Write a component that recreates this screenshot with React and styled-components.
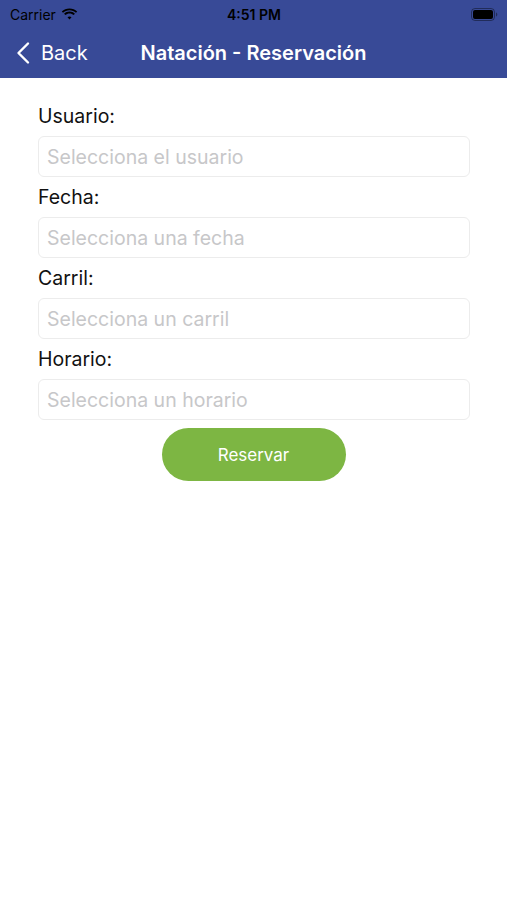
import React from "react";
import styled, { createGlobalStyle } from "styled-components";

const Global = createGlobalStyle`
  html, body { margin: 0; padding: 0; background: #fff; }
  body { font-family: "Inter", "Liberation Sans", sans-serif; -webkit-font-smoothing: antialiased; }
  * { box-sizing: border-box; }
`;

const Screen = styled.div`
  width: 507px;
  min-height: 900px;
  background: #fff;
  display: flex;
  flex-direction: column;
`;

const Header = styled.header`
  background: #384a97;
  height: 78px;
  display: flex;
  flex-direction: column;
`;

const StatusBar = styled.div`
  height: 28px;
  display: grid;
  grid-template-columns: 1fr auto 1fr;
  align-items: center;
  padding: 0 9px 0 10px;
  color: #000;
  font-size: 14px;
`;

const Carrier = styled.div`
  display: flex;
  align-items: center;
  gap: 5px;
  font-weight: 400;
`;

const Time = styled.div`
  font-weight: 600;
  font-size: 14px;
`;

const Battery = styled.div`
  justify-self: end;
  display: flex;
  align-items: center;
`;

const NavBar = styled.div`
  flex: 1;
  position: relative;
  display: flex;
  align-items: center;
  justify-content: center;
  color: #fff;
`;

const BackButton = styled.div`
  position: absolute;
  left: 15px;
  top: 0;
  bottom: 0;
  display: flex;
  align-items: center;
  gap: 10px;
  font-size: 20px;
  color: #fff;
`;

const Title = styled.h1`
  margin: 0;
  font-size: 20px;
  font-weight: 600;
  color: #fff;
`;

const Form = styled.div`
  padding: 18px 37px 0 38px;
  display: flex;
  flex-direction: column;
`;

const Label = styled.div`
  line-height: 40px;
  height: 40px;
  font-size: 19.5px;
  color: #111;
`;

const Field = styled.div`
  height: 41px;
  border: 1px solid #ececec;
  border-radius: 6px;
  display: flex;
  align-items: center;
  padding-left: 8px;
  font-size: 19.5px;
  color: #c7c7c9;
`;

const Button = styled.button`
  align-self: center;
  margin-top: 8px;
  width: 184px;
  height: 53px;
  border: none;
  border-radius: 27px;
  background: #7db643;
  color: #fff;
  font-family: inherit;
  font-size: 17px;
  margin-left: -1px;
`;

const fields = [
  ["Usuario:", "Selecciona el usuario"],
  ["Fecha:", "Selecciona una fecha"],
  ["Carril:", "Selecciona un carril"],
  ["Horario:", "Selecciona un horario"],
];

export default function App() {
  return (
    <Screen>
      <Global />
      <Header>
        <StatusBar>
          <Carrier>
            Carrier
            <svg width="17" height="12" viewBox="0 0 17 12">
              <path d="M8.5 2.2c2.5 0 4.8 1 6.5 2.6l1.2-1.3C14.2 1.6 11.5.4 8.5.4S2.8 1.6.8 3.5L2 4.8c1.7-1.6 4-2.6 6.5-2.6z" fill="#000" />
              <path d="M8.5 5.4c1.6 0 3 .6 4.2 1.6l1.2-1.3c-1.4-1.3-3.3-2.1-5.4-2.1S4.5 4.4 3.1 5.7L4.3 7c1.2-1 2.6-1.6 4.2-1.6z" fill="#000" />
              <path d="M8.5 8.5c.8 0 1.4.3 2 .8L8.5 11.5l-2-2.2c.6-.5 1.2-.8 2-.8z" fill="#000" />
            </svg>
          </Carrier>
          <Time>4:51 PM</Time>
          <Battery>
            <svg width="27" height="13" viewBox="0 0 27 13">
              <rect x="0.5" y="0.5" width="23" height="12" rx="3.5" fill="none" stroke="#000" strokeOpacity="0.4" />
              <rect x="2" y="2" width="20" height="9" rx="2" fill="#000" />
              <path d="M25 4.5v4c.8-.3 1.3-1.1 1.3-2s-.5-1.7-1.3-2z" fill="#000" fillOpacity="0.4" />
            </svg>
          </Battery>
        </StatusBar>
        <NavBar>
          <BackButton>
            <svg width="16" height="24" viewBox="0 0 16 24">
              <path d="M13 2.5L3.5 12l9.5 9.5" fill="none" stroke="#fff" strokeWidth="2.4" strokeLinecap="round" strokeLinejoin="round" />
            </svg>
            Back
          </BackButton>
          <Title>Natación - Reservación</Title>
        </NavBar>
      </Header>
      <Form>
        {fields.map(([l, p]) => (
          <React.Fragment key={l}>
            <Label>{l}</Label>
            <Field>{p}</Field>
          </React.Fragment>
        ))}
        <Button>Reservar</Button>
      </Form>
    </Screen>
  );
}
